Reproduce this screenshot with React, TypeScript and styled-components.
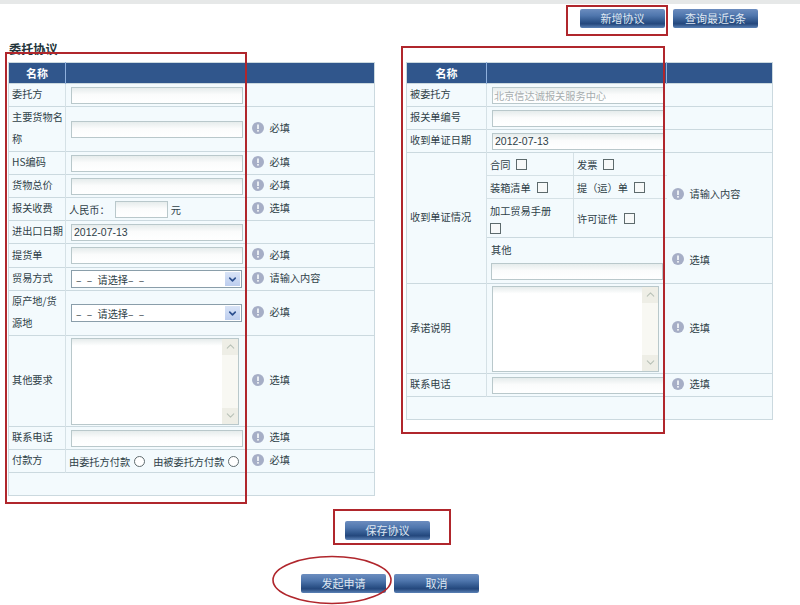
import { ReactNode } from 'react'
import styled, { createGlobalStyle } from 'styled-components'
import { ChevronDown, ChevronUp } from 'lucide-react'

const GlobalStyle = createGlobalStyle`
  html, body {
    margin: 0;
    padding: 0;
    background: #fff;
    overflow: hidden;
  }
  body {
    font-family: "Noto Sans CJK SC", "Liberation Sans", sans-serif;
    font-size: 10.2px;
    color: #2f4148;
  }
`

const Page = styled.div`
  position: relative;
  width: 800px;
  height: 605px;
  overflow: hidden;
`

const TopStrip = styled.div`
  height: 4px;
  background: #e6e8e8;
`

const Toolbar = styled.div`
  display: flex;
  justify-content: flex-end;
  gap: 8px;
  padding: 5px 42px 0 0;
`

const Button = styled.button`
  width: 85px;
  height: 19px;
  padding: 0;
  border: 0;
  border-radius: 2px;
  background: linear-gradient(#6c8dbf 0%, #4f76ad 35%, #2c5288 68%, #24477c 78%, #5b82b6 100%);
  color: #dfe7f1;
  font-family: inherit;
  font-size: 11px;
  line-height: 17px;
`

const Title = styled.h2`
  margin: 13px 0 5px 9px;
  height: 16px;
  font-size: 12.2px;
  line-height: 16px;
  font-weight: 700;
  color: #22343a;
`

const Tables = styled.div`
  display: flex;
  align-items: flex-start;
  gap: 31px;
  padding-left: 8px;
`

const Table = styled.table<{ $width: number }>`
  width: ${p => p.$width}px;
  table-layout: fixed;
  border-collapse: collapse;
  border: 1px solid #cbd9df;
  background: #f3fafd;
`

const HeaderRow = styled.tr`
  height: 21px;
  background: #30568c;
`

const HeaderCell = styled.th`
  padding: 0;
  border-right: 1px solid #8fb0dd;
  color: #fff;
  font-size: 11px;
  font-weight: 700;
  text-align: center;

  &:last-child {
    border-right: 0;
  }
`

const Row = styled.tr<{ $height: number }>`
  height: ${p => p.$height}px;
  border-top: 1px solid #cbd9df;
`

const LabelCell = styled.td`
  padding: 0 0 0 3px;
  border-right: 1px solid #d5e1e6;
  line-height: 22px;
  word-break: break-all;
`

const LabelText = styled.div`
  margin-top: -2px;
`

const FieldCell = styled.td`
  padding: 0 0 0 5px;
  overflow: hidden;
`

const HintCell = styled.td`
  padding: 0 0 3px 5px;
  white-space: nowrap;
`

const HintWrap = styled.div`
  display: flex;
  align-items: center;
  gap: 6px;
`

const Field = styled.input<{ $width?: number }>`
  display: block;
  box-sizing: border-box;
  width: ${p => p.$width ?? 172}px;
  height: 17px;
  margin: 0;
  padding: 0 2px;
  border: 1px solid #b9c8cb;
  background: linear-gradient(#e6ecec, #fbfcfc 45%, #fff);
  font-family: "Liberation Sans", "Noto Sans CJK SC", sans-serif;
  font-size: 10.5px;
  color: #2f4148;

  &:disabled {
    padding: 0 1px;
    color: #a6adaf;
    font-family: inherit;
    font-size: 10.2px;
  }
`

const FeeField = styled(Field)`
  margin-left: 2px;
`

const InlineGroup = styled.div`
  display: flex;
  align-items: center;
  gap: 3px;
  margin-left: -2px;
`

const SelectBox = styled.div`
  display: flex;
  align-items: center;
  justify-content: space-between;
  box-sizing: border-box;
  width: 171px;
  height: 18px;
  padding: 0 1px 0 4px;
  border: 1px solid #8a9eaa;
  background: #fff;
  font-size: 10.2px;
  word-spacing: 3px;
`

const SelectArrow = styled.span`
  display: flex;
  align-items: center;
  justify-content: center;
  width: 15px;
  height: 14px;
  background: linear-gradient(#d9e4f7, #bccdee);
  color: #2c4f8f;
`

const TextArea = styled.div<{ $width: number; $height: number }>`
  display: flex;
  justify-content: flex-end;
  box-sizing: border-box;
  width: ${p => p.$width}px;
  height: ${p => p.$height}px;
  border: 1px solid #b9c8cb;
  background: linear-gradient(#e6ecec, #fff 8%);
`

const ScrollBar = styled.div`
  display: flex;
  flex-direction: column;
  justify-content: space-between;
  width: 16px;
  background: #f8f8f3;
`

const ScrollButton = styled.span`
  display: flex;
  align-items: center;
  justify-content: center;
  height: 16px;
  background: #eeeee6;
  color: #b9c2b8;
`

const CheckRow = styled.div<{ $height: number }>`
  display: grid;
  grid-template-columns: 87px 1fr;
  box-sizing: border-box;
  height: ${p => p.$height}px;
  border-bottom: 1px solid #d5e1e6;

  &:last-child {
    border-bottom: 0;
  }
`

const CheckCell = styled.div<{ $stacked?: boolean }>`
  display: flex;
  flex-direction: ${p => (p.$stacked ? 'column' : 'row')};
  align-items: ${p => (p.$stacked ? 'flex-start' : 'center')};
  justify-content: ${p => (p.$stacked ? 'center' : 'flex-start')};
  gap: ${p => (p.$stacked ? '5px' : '6px')};
  padding-left: 3px;
  border-right: 1px solid #d5e1e6;

  &:last-child {
    border-right: 0;
  }
`

const CheckBox = styled.span`
  display: inline-block;
  box-sizing: border-box;
  width: 11px;
  height: 11px;
  border: 1px solid #5d6a6c;
  background: #f7f9f9;
`

const Radio = styled.span`
  display: inline-block;
  box-sizing: border-box;
  width: 11px;
  height: 11px;
  margin: 0 5px 0 1px;
  border: 1px solid #5f6b6e;
  border-radius: 50%;
  background: #fff;
`

const OtherWrap = styled.div`
  display: flex;
  flex-direction: column;
  gap: 6px;
  margin-left: -1px;
`

const CheckGroup = styled.div`
  margin: 0 0 0 -5px;
`

const FooterRow = styled.div<{ $top: number; $left: number }>`
  display: flex;
  gap: 8px;
  margin-top: ${p => p.$top}px;
  padding-left: ${p => p.$left}px;
`

const Mark = styled.div<{ $x: number; $y: number; $w: number; $h: number }>`
  position: absolute;
  left: ${p => p.$x}px;
  top: ${p => p.$y}px;
  width: ${p => p.$w}px;
  height: ${p => p.$h}px;
  box-sizing: border-box;
  border: 2px solid #b0262c;
  pointer-events: none;
`

const Ring = styled.svg`
  position: absolute;
  left: 271px;
  top: 555px;
`

function InfoIcon() {
  return (
    <svg width="12" height="12" viewBox="0 0 12 12">
      <circle cx="6" cy="6" r="6" fill="#a6aec6" />
      <rect x="5" y="2.5" width="2" height="4.5" fill="#e9edf2" />
      <rect x="5" y="8" width="2" height="1.6" fill="#e9edf2" />
    </svg>
  )
}

function Hint({ text }: { text?: string }) {
  return (
    <HintCell>
      {text && (
        <HintWrap>
          <InfoIcon />
          {text}
        </HintWrap>
      )}
    </HintCell>
  )
}

function Line({ label, height = 23, hint, children }: { label: string; height?: number; hint?: string; children: ReactNode }) {
  return (
    <Row $height={height}>
      <LabelCell>
        <LabelText>{label}</LabelText>
      </LabelCell>
      <FieldCell>{children}</FieldCell>
      <Hint text={hint} />
    </Row>
  )
}

function Select() {
  return (
    <SelectBox>
      – – 请选择– –
      <SelectArrow>
        <ChevronDown size={11} strokeWidth={3.5} />
      </SelectArrow>
    </SelectBox>
  )
}

function Memo({ width, height }: { width: number; height: number }) {
  return (
    <TextArea $width={width} $height={height}>
      <ScrollBar>
        <ScrollButton>
          <ChevronUp size={13} strokeWidth={2} />
        </ScrollButton>
        <ScrollButton>
          <ChevronDown size={13} strokeWidth={2} />
        </ScrollButton>
      </ScrollBar>
    </TextArea>
  )
}

function Head({ first, second, third }: { first: number; second: number; third: number }) {
  return (
    <>
      <colgroup>
        <col style={{ width: first }} />
        <col style={{ width: second }} />
        <col style={{ width: third }} />
      </colgroup>
      <thead>
        <HeaderRow>
          <HeaderCell>名称</HeaderCell>
          <HeaderCell />
          <HeaderCell />
        </HeaderRow>
      </thead>
    </>
  )
}

export default function App() {
  return (
    <Page>
      <GlobalStyle />
      <TopStrip />
      <Toolbar>
        <Button>新增协议</Button>
        <Button>查询最近5条</Button>
      </Toolbar>
      <Title>委托协议</Title>
      <Tables>
        <Table $width={366}>
          <Head first={57} second={181} third={128} />
          <tbody>
            <Line label="委托方">
              <Field />
            </Line>
            <Line label="主要货物名称" height={45} hint="必填">
              <Field />
            </Line>
            <Line label="HS编码" hint="必填">
              <Field />
            </Line>
            <Line label="货物总价" hint="必填">
              <Field />
            </Line>
            <Line label="报关收费" hint="选填">
              <InlineGroup>
                人民币：
                <FeeField $width={53} />
                元
              </InlineGroup>
            </Line>
            <Line label="进出口日期">
              <Field defaultValue="2012-07-13" />
            </Line>
            <Line label="提货单" height={24} hint="必填">
              <Field />
            </Line>
            <Line label="贸易方式" hint="请输入内容">
              <Select />
            </Line>
            <Line label="原产地/货源地" height={45} hint="必填">
              <Select />
            </Line>
            <Line label="其他要求" height={91} hint="选填">
              <Memo width={168} height={87} />
            </Line>
            <Line label="联系电话" hint="选填">
              <Field />
            </Line>
            <Line label="付款方" hint="必填">
              <InlineGroup>
                由委托方付款
                <Radio />
                由被委托方付款
                <Radio />
              </InlineGroup>
            </Line>
            <Row $height={23}>
              <td colSpan={3} />
            </Row>
          </tbody>
        </Table>

        <Table $width={366}>
          <Head first={80} second={180} third={106} />
          <tbody>
            <Line label="被委托方">
              <Field disabled defaultValue="北京信达诚报关服务中心" />
            </Line>
            <Line label="报关单编号">
              <Field />
            </Line>
            <Line label="收到单证日期">
              <Field defaultValue="2012-07-13" />
            </Line>
            <Row $height={84}>
              <LabelCell rowSpan={2}>
                <LabelText>收到单证情况</LabelText>
              </LabelCell>
              <FieldCell>
                <CheckGroup>
                  <CheckRow $height={23}>
                    <CheckCell>
                      合同
                      <CheckBox />
                    </CheckCell>
                    <CheckCell>
                      发票
                      <CheckBox />
                    </CheckCell>
                  </CheckRow>
                  <CheckRow $height={23}>
                    <CheckCell>
                      装箱清单
                      <CheckBox />
                    </CheckCell>
                    <CheckCell>
                      提（运）单
                      <CheckBox />
                    </CheckCell>
                  </CheckRow>
                  <CheckRow $height={38}>
                    <CheckCell $stacked>
                      加工贸易手册
                      <CheckBox />
                    </CheckCell>
                    <CheckCell>
                      许可证件
                      <CheckBox />
                    </CheckCell>
                  </CheckRow>
                </CheckGroup>
              </FieldCell>
              <Hint text="请输入内容" />
            </Row>
            <Row $height={46}>
              <FieldCell>
                <OtherWrap>
                  其他
                  <Field />
                </OtherWrap>
              </FieldCell>
              <Hint text="选填" />
            </Row>
            <Line label="承诺说明" height={90} hint="选填">
              <Memo width={167} height={86} />
            </Line>
            <Line label="联系电话" hint="选填">
              <Field />
            </Line>
            <Row $height={23}>
              <td colSpan={3} />
            </Row>
          </tbody>
        </Table>
      </Tables>

      <FooterRow $top={25} $left={345}>
        <Button>保存协议</Button>
      </FooterRow>
      <FooterRow $top={34} $left={301}>
        <Button>发起申请</Button>
        <Button>取消</Button>
      </FooterRow>

      <Mark $x={566} $y={5} $w={102} $h={31} />
      <Mark $x={5} $y={52} $w={242} $h={452} />
      <Mark $x={401} $y={46} $w={264} $h={388} />
      <Mark $x={333} $y={509} $w={118} $h={36} />
      <Ring width="122" height="50" viewBox="0 0 122 50">
        <ellipse cx="61" cy="25" rx="59" ry="23.5" fill="none" stroke="#b0262c" strokeWidth="1.6" />
      </Ring>
    </Page>
  )
}
